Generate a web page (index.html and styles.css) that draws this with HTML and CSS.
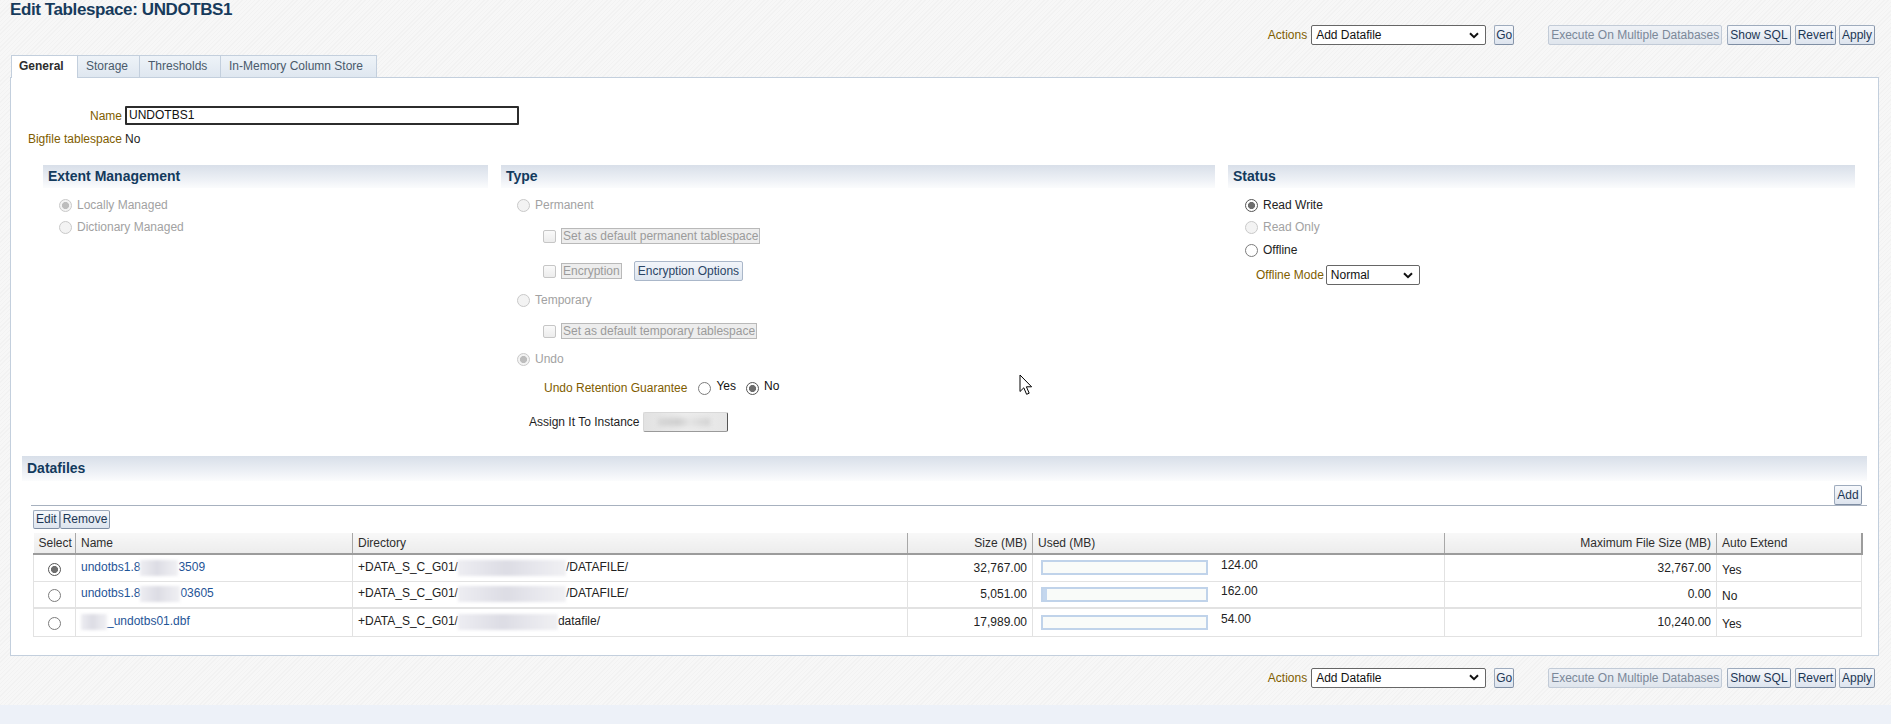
FILE: index.html
```html
<!DOCTYPE html>
<html lang="en">
<head>
<meta charset="utf-8">
<title>Edit Tablespace: UNDOTBS1</title>
<link rel="stylesheet" href="styles.css">
</head>
<body>
<div class="page">
  <h1 class="title">Edit Tablespace: UNDOTBS1</h1>

  <div class="toolbar">
    <span class="lbl">Actions</span>
    <div class="select sel-actions"><span>Add Datafile</span><svg class="chev" width="10" height="7" viewBox="0 0 10 7"><path d="M1 1.2 L5 5.2 L9 1.2" fill="none" stroke="#111" stroke-width="2"/></svg></div>
    <button class="btn go">Go</button>
    <button class="btn dis exec">Execute On Multiple Databases</button>
    <button class="btn sql">Show SQL</button>
    <button class="btn revert">Revert</button>
    <button class="btn apply">Apply</button>
  </div>

  <div class="tabs">
    <div class="tab active">General</div>
    <div class="tab">Storage</div>
    <div class="tab">Thresholds</div>
    <div class="tab">In-Memory Column Store</div>
  </div>

  <div class="panel">
    <div class="form">
      <div class="frow"><span class="flabel">Name</span><div class="input-name">UNDOTBS1</div></div>
      <div class="frow bigfile"><span class="flabel">Bigfile tablespace</span><span class="fval">No</span></div>
    </div>

    <div class="sections">
      <section class="sec extent">
        <h2 class="sec-h">Extent Management</h2>
        <div class="sec-body">
          <div class="opt dis"><span class="radio dis on"></span>Locally Managed</div>
          <div class="opt dis"><span class="radio dis"></span>Dictionary Managed</div>
        </div>
      </section>

      <section class="sec type">
        <h2 class="sec-h">Type</h2>
        <div class="sec-body">
          <div class="opt dis"><span class="radio dis"></span>Permanent</div>
          <div class="opt sub r-cb1"><span class="cbox"></span><span class="dlabel">Set as default permanent tablespace</span></div>
          <div class="opt sub r-enc"><span class="cbox"></span><span class="dlabel">Encryption</span><button class="btn encopt">Encryption Options</button></div>
          <div class="opt dis r-temp"><span class="radio dis"></span>Temporary</div>
          <div class="opt sub r-cb2"><span class="cbox"></span><span class="dlabel">Set as default temporary tablespace</span></div>
          <div class="opt dis r-undo"><span class="radio dis on"></span>Undo</div>
          <div class="opt r-ret">
            <span class="glabel">Undo Retention Guarantee</span>
            <span class="radio yes"></span><span class="rtext">Yes</span>
            <span class="radio on no"></span><span class="rtext">No</span>
          </div>
          <div class="opt r-assign">
            <span class="alabel">Assign It To Instance</span>
            <span class="blurfield"><span class="smudge"></span></span>
          </div>
        </div>
      </section>

      <section class="sec status">
        <h2 class="sec-h">Status</h2>
        <div class="sec-body">
          <div class="opt"><span class="radio on"></span>Read Write</div>
          <div class="opt dis"><span class="radio dis"></span>Read Only</div>
          <div class="opt r-off"><span class="radio"></span>Offline</div>
          <div class="opt r-mode">
            <span class="glabel">Offline Mode</span>
            <div class="select sel-mode"><span>Normal</span><svg class="chev" width="10" height="7" viewBox="0 0 10 7"><path d="M1 1.2 L5 5.2 L9 1.2" fill="none" stroke="#111" stroke-width="2"/></svg></div>
          </div>
        </div>
      </section>
    </div>

    <section class="datafiles">
      <h2 class="sec-h">Datafiles</h2>
      <div class="df-bar"><button class="btn add">Add</button></div>
      <div class="df-actions"><button class="btn">Edit</button><button class="btn">Remove</button></div>
      <table class="grid">
        <colgroup>
          <col class="c-sel"><col class="c-name"><col class="c-dir"><col class="c-size"><col class="c-used"><col class="c-max"><col class="c-auto">
        </colgroup>
        <thead>
          <tr>
            <th class="ctr">Select</th>
            <th>Name</th>
            <th>Directory</th>
            <th class="num">Size (MB)</th>
            <th>Used (MB)</th>
            <th class="num">Maximum File Size (MB)</th>
            <th class="last">Auto Extend</th>
          </tr>
        </thead>
        <tbody>
          <tr>
            <td class="ctr"><span class="radio on"></span></td>
            <td><a class="lnk">undotbs1.8<span class="blur w38"></span>3509</a></td>
            <td>+DATA_S_C_G01/<span class="blur w108"></span>/DATAFILE/</td>
            <td class="num">32,767.00</td>
            <td><span class="bar"></span><span class="used">124.00</span></td>
            <td class="num">32,767.00</td>
            <td class="auto">Yes</td>
          </tr>
          <tr>
            <td class="ctr"><span class="radio"></span></td>
            <td><a class="lnk">undotbs1.8<span class="blur w40"></span>03605</a></td>
            <td>+DATA_S_C_G01/<span class="blur w108"></span>/DATAFILE/</td>
            <td class="num">5,051.00</td>
            <td><span class="bar"><span class="fill"></span></span><span class="used">162.00</span></td>
            <td class="num">0.00</td>
            <td class="auto">No</td>
          </tr>
          <tr class="r3">
            <td class="ctr"><span class="radio"></span></td>
            <td><a class="lnk"><span class="blur w26"></span>_undotbs01.dbf</a></td>
            <td>+DATA_S_C_G01/<span class="blur w100"></span>datafile/</td>
            <td class="num">17,989.00</td>
            <td><span class="bar"></span><span class="used">54.00</span></td>
            <td class="num">10,240.00</td>
            <td class="auto">Yes</td>
          </tr>
        </tbody>
      </table>
    </section>
  </div>

  <div class="toolbar bottom">
    <span class="lbl">Actions</span>
    <div class="select sel-actions"><span>Add Datafile</span><svg class="chev" width="10" height="7" viewBox="0 0 10 7"><path d="M1 1.2 L5 5.2 L9 1.2" fill="none" stroke="#111" stroke-width="2"/></svg></div>
    <button class="btn go">Go</button>
    <button class="btn dis exec">Execute On Multiple Databases</button>
    <button class="btn sql">Show SQL</button>
    <button class="btn revert">Revert</button>
    <button class="btn apply">Apply</button>
  </div>
</div>
<div class="band"></div>

<svg class="cursor" width="14" height="22" viewBox="0 0 14 22"><path d="M1 1 L1 17.5 L4.8 13.8 L7.6 20.3 L10.2 19.2 L7.4 12.8 L12.6 12.8 Z" fill="#fff" stroke="#000" stroke-width="1" stroke-linejoin="round"/></svg>
</body>
</html>
```

FILE: styles.css
```css
* { box-sizing: border-box; }

html, body {
  margin: 0;
  padding: 0;
}

body {
  width: 1891px;
  height: 724px;
  overflow: hidden;
  position: relative;
  font-family: "Liberation Sans", Arial, sans-serif;
  font-size: 12px;
  color: #222;
  background-color: #f5f5f5;
  background-image: repeating-linear-gradient(135deg, #f2f2f2 0 1px, #f7f7f7 1px 3px);
}

.page {
  height: 705px;
}

.title {
  margin: 0;
  padding-left: 10px;
  height: 20px;
  line-height: 20px;
  font-size: 17px;
  letter-spacing: -0.4px;
  font-weight: bold;
  color: #173b5c;
}

/* ---------- toolbar ---------- */
.toolbar {
  margin-top: 5px;
  height: 20px;
  display: flex;
  justify-content: flex-end;
  align-items: center;
  padding-right: 16px;
}
.toolbar.bottom { margin-top: 12px; }

.lbl {
  color: #7f5d00;
  margin-right: 4px;
}

.select {
  height: 20px;
  border: 1px solid #666;
  border-radius: 2px;
  background: #fff;
  display: flex;
  align-items: center;
  justify-content: space-between;
  padding: 0 6px 0 4px;
  color: #111;
}
.sel-actions { width: 175px; }
.sel-mode { width: 94px; }
.chev { display: block; }

.btn {
  font-family: "Liberation Sans", Arial, sans-serif;
  font-size: 12px;
  height: 20px;
  padding: 0 3px;
  border: 1px solid #9eabbd;
  border-bottom-color: #7f8ea3;
  border-right-color: #8795a9;
  border-radius: 2px;
  background: linear-gradient(#f7f9fc, #dde4ee);
  color: #1d3755;
  cursor: default;
  line-height: 18px;
  white-space: nowrap;
  flex: none;
}
.btn.go { margin-left: 8px; width: 20px; padding: 0; }
.btn.dis {
  color: #7b8899;
  background: linear-gradient(#eef1f6, #dfe5ed);
  border-color: #c2cbd7;
}
.btn.exec { margin-left: 34px; padding: 0 2px; }
.btn.sql { margin-left: 5px; padding: 0 2px; }
.btn.revert { margin-left: 4px; padding: 0 2px; }
.btn.apply { margin-left: 3px; padding: 0 2px; }

/* ---------- tabs ---------- */
.tabs {
  margin: 10px 0 0 11px;
  display: flex;
  height: 22px;
  position: relative;
  z-index: 1;
}
.tab {
  height: 22px;
  line-height: 21px;
  padding: 0 8px;
  border: 1px solid #c3cfdd;
  border-bottom: none;
  border-left: none;
  background: linear-gradient(#eef3f8, #dfe7f0);
  color: #4a5a6b;
  white-space: nowrap;
}
.tab.active {
  background: #fff;
  color: #2d2d2d;
  font-weight: bold;
  border-left: 1px solid #c3cfdd;
  height: 23px;
  width: 67px;
  padding: 0 0 0 7px;
}
.tab:nth-child(2) { width: 62px; }
.tab:nth-child(3) { width: 81px; }
.tab:nth-child(4) { width: 156px; }

/* ---------- panel ---------- */
.panel {
  margin: 0 12px 0 10px;
  border: 1px solid #c3cfdd;
  background: #fff;
  padding: 28px 0 18px 0;
}

.form { display: flex; flex-direction: column; }
.frow { display: flex; align-items: center; }
.flabel {
  width: 111px;
  text-align: right;
  color: #7f5d00;
  margin-right: 3px;
}
.input-name {
  width: 394px;
  height: 19px;
  border: 2px solid #2c2c2c;
  border-radius: 1px;
  padding-left: 2px;
  line-height: 15px;
  color: #111;
}
.frow.bigfile { margin-top: 6px; height: 16px; }
.fval { color: #222; }

/* ---------- sections ---------- */
.sections {
  margin: 18px 0 0 32px;
  display: grid;
  grid-template-columns: 445px 714px 627px;
  column-gap: 13px;
  align-items: start;
}

.sec-h {
  margin: 0;
  height: 23px;
  line-height: 23px;
  padding-left: 5px;
  font-size: 14px;
  font-weight: bold;
  color: #133a5d;
  background: linear-gradient(#d8dfe9, #eef1f6 65%, #fbfcfd);
}

.sec-body {
  padding-top: 6px;
  display: flex;
  flex-direction: column;
}

.opt {
  height: 22px;
  display: flex;
  align-items: center;
  color: #222;
  white-space: nowrap;
}
.opt.dis { color: #a2a2a2; }

.radio {
  width: 13px;
  height: 13px;
  border-radius: 50%;
  border: 1px solid #7c7c7c;
  background: #fff;
  flex: none;
  display: inline-block;
  margin-right: 5px;
}
.radio.on {
  border-color: #555;
  background: radial-gradient(circle, #6e6e6e 0 3.3px, #fff 3.8px);
}
.radio.dis {
  border-color: #c9c9c9;
  background: #f3f3f3;
}
.radio.dis.on {
  background: radial-gradient(circle, #bdbdbd 0 3.3px, #f3f3f3 3.8px);
}

.extent .opt { padding-left: 16px; }
.type .opt { padding-left: 16px; }
.status .opt { padding-left: 17px; }

.type .opt.sub { padding-left: 42px; }
.r-cb1 { margin-top: 9px; }
.r-enc { margin-top: 13px; }
.r-temp { margin-top: 7px; }
.r-cb2 { margin-top: 9px; }
.r-undo { margin-top: 6px; }
.r-ret { margin-top: 7px; }
.r-assign { margin-top: 12px; }

.cbox {
  width: 13px;
  height: 13px;
  border: 1px solid #c6c6c6;
  border-radius: 2px;
  background: linear-gradient(#fafafa, #ececec);
  margin-right: 5px;
  flex: none;
}
.dlabel {
  height: 16px;
  line-height: 15px;
  border: 1px solid #b9b9b9;
  background: #ededed;
  color: #9b9b9b;
  padding: 0 1px;
}
.btn.encopt {
  margin-left: 12px;
  color: #2b4565;
  background: linear-gradient(#f2f5fa, #dde5ef);
  border-color: #aab7c9;
}

.type .opt.r-ret { padding-left: 43px; }
.glabel { color: #7f5d00; }
.r-ret .radio.yes { margin-left: 11px; }
.r-ret .radio.no { margin-left: 10px; }
.rtext { margin-top: -4px; color: #111; }

.type .opt.r-assign { padding-left: 28px; }
.alabel { color: #1e1e1e; margin-right: 3px; }
.blurfield {
  width: 85px;
  height: 20px;
  border: 1px solid #d8d8d8;
  border-right-color: #555;
  border-bottom-color: #9a9a9a;
  border-radius: 2px;
  background: linear-gradient(90deg, #e2e2e2, #ececec 50%, #e6e6e6);
  overflow: hidden;
  display: flex;
  align-items: center;
  padding-left: 14px;
}
.smudge {
  width: 52px;
  height: 8px;
  background: linear-gradient(90deg, #d6d6d6, #cfcfcf 40%, #e4e4e4 60%, #d2d2d2);
  filter: blur(2px);
}

.status .opt.r-off { margin-top: 1px; }
.status .opt.r-mode { margin-top: 3px; padding-left: 28px; }
.r-mode .glabel { margin-right: 2px; }

/* ---------- datafiles ---------- */
.datafiles {
  margin: 23px 11px 0 11px;
}
.datafiles .sec-h { height: 25px; line-height: 25px; }
.df-bar {
  margin-left: 9px;
  padding: 4px 5px 0 0;
  display: flex;
  justify-content: flex-end;
  border-bottom: 1px solid #a7b1bf;
}
.btn.add { width: 28px; padding: 0; }
.df-actions {
  margin: 4px 0 0 11px;
  display: flex;
}
.df-actions .btn { height: 19px; line-height: 17px; padding: 0 2px; }

.grid {
  margin: 4px 0 0 11px;
  width: 1828px;
  border-collapse: collapse;
  table-layout: fixed;
}
.c-sel { width: 42px; }
.c-name { width: 277px; }
.c-dir { width: 555px; }
.c-size { width: 125px; }
.c-used { width: 412px; }
.c-max { width: 272px; }
.c-auto { width: 145px; }

.grid th {
  height: 21px;
  font-weight: normal;
  text-align: left;
  color: #2e2e2e;
  padding: 0 5px;
  background: linear-gradient(#f8f8f8, #ececec);
  border-left: 1px solid #a8a8a8;
  border-bottom: 2px solid #9c9c9c;
}
.grid th:first-child { border-left: none; }
.grid th.last { border-right: 2px solid #9c9c9c; }
.grid th.ctr { text-align: center; }
.grid th.num, .grid td.num { text-align: right; }

.grid td {
  height: 27px;
  padding: 0 5px;
  border: 1px solid #e2e2e2;
  border-top: none;
  color: #222;
  white-space: nowrap;
  overflow: hidden;
}
.grid tr.r3 td { border-top: 2px solid #e2e2e2; height: 28px; }
.grid td.ctr { text-align: center; }
.grid td.ctr .radio { margin: 3px 0 0 0; vertical-align: middle; }
.grid td.auto { padding-top: 4px; }

.lnk { color: #1f5597; text-decoration: none; }

.blur {
  display: inline-block;
  height: 16px;
  vertical-align: middle;
  background: linear-gradient(90deg, #ededf2, #dcdce4 45%, #e6e6ec 70%, #f0f0f3);
  filter: blur(1.5px);
}
.w26 { width: 26px; }
.w38 { width: 38px; }
.w40 { width: 40px; }
.w100 { width: 100px; }
.w108 { width: 108px; }

.bar {
  display: inline-block;
  vertical-align: middle;
  width: 167px;
  height: 15px;
  margin-left: 3px;
  border: 2px solid #c0d3ea;
  background: #f9fbf9;
  position: relative;
}
.bar .fill {
  position: absolute;
  left: 0;
  top: 0;
  width: 4px;
  height: 11px;
  background: #c4d7ee;
}
.used {
  display: inline-block;
  margin-left: 13px;
  vertical-align: middle;
  position: relative;
  top: -3px;
}

.band {
  height: 19px;
  background: #edf1f8;
}

.cursor {
  position: absolute;
  left: 1019px;
  top: 374px;
}
```
